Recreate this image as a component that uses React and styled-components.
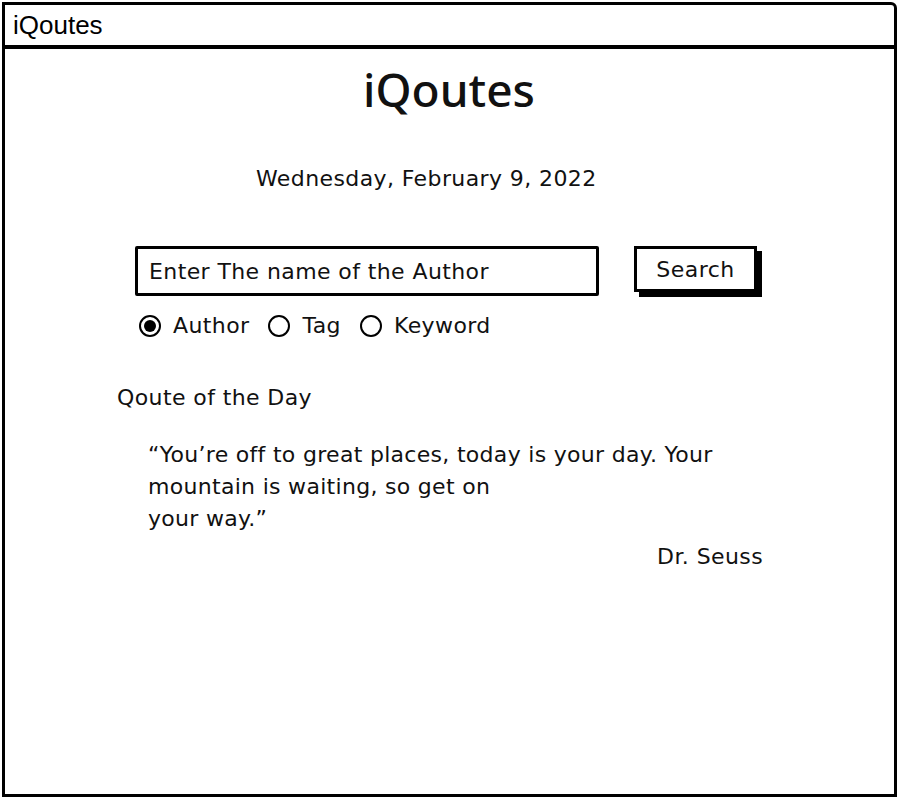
import React, { useState } from "react";
import styled, { createGlobalStyle } from "styled-components";

const GlobalStyle = createGlobalStyle`
  html, body {
    margin: 0;
    padding: 0;
    background: #fff;
  }
  body {
    font-family: "DejaVu Sans", "Noto Sans", sans-serif;
    letter-spacing: 0.4px;
    color: #111;
  }
`;

const Window = styled.div`
  box-sizing: border-box;
  margin: 2px 3px 3px 2px;
  height: 795px;
  border: 3px solid #000;
  border-top-right-radius: 6px;
  display: flex;
  flex-direction: column;
  background: #fff;
`;

const TitleBar = styled.div`
  height: 40px;
  border-bottom: 4px solid #000;
  display: flex;
  align-items: center;
  padding-left: 8px;
  font-family: "Liberation Sans", Arial, sans-serif;
  font-size: 26px;
  letter-spacing: 0;
  color: #000;
`;

const Content = styled.div`
  display: flex;
  flex-direction: column;
  padding: 0 131px 0 112px;
`;

const Heading = styled.h1`
  margin: 12px 0 0;
  text-align: center;
  font-family: "Noto Sans", sans-serif;
  font-size: 46px;
  line-height: 56px;
  font-weight: 500;
  letter-spacing: 0;
  padding-left: 18px;
`;

const DateLine = styled.div`
  margin-top: 47px;
  padding-left: 139px;
  font-size: 22px;
  line-height: 29px;
`;

const SearchRow = styled.div`
  margin-top: 53px;
  display: flex;
  align-items: flex-start;
  gap: 35px;
  padding-left: 18px;
`;

const SearchInput = styled.input`
  box-sizing: border-box;
  width: 464px;
  height: 50px;
  border: 3.5px solid #000;
  border-radius: 2px;
  padding: 0 11px;
  font-family: inherit;
  font-size: 22px;
  letter-spacing: 0.4px;
  color: #111;
  outline: none;
  &::placeholder {
    color: #111;
  }
`;

const SearchButton = styled.button`
  box-sizing: border-box;
  width: 123px;
  height: 46px;
  border: 3px solid #000;
  background: #fff;
  box-shadow: 5px 5px 0 #000;
  font-family: inherit;
  font-size: 22px;
  letter-spacing: 0.5px;
  color: #111;
  padding: 0;
  cursor: pointer;
`;

const RadioRow = styled.div`
  margin-top: 15px;
  display: flex;
  align-items: center;
  padding-left: 22px;
  gap: 19px;
`;

const RadioLabel = styled.label`
  display: flex;
  align-items: center;
  gap: 12px;
  font-size: 22px;
  line-height: 30px;
  cursor: pointer;
`;

const RadioDot = styled.span`
  box-sizing: border-box;
  width: 22px;
  height: 22px;
  border: 2px solid #000;
  border-radius: 50%;
  display: flex;
  align-items: center;
  justify-content: center;
  &::after {
    content: "";
    width: 12px;
    height: 12px;
    border-radius: 50%;
    background: #000;
    display: ${(p) => (p.$checked ? "block" : "none")};
  }
`;

const SectionTitle = styled.div`
  margin-top: 42px;
  font-size: 22px;
  line-height: 30px;
`;

const Quote = styled.blockquote`
  margin: 26px 0 0;
  padding-left: 31px;
  font-size: 22px;
  line-height: 32px;
  letter-spacing: 0.3px;
`;

const Author = styled.div`
  margin-top: 7px;
  text-align: right;
  font-size: 22px;
  line-height: 30px;
`;

const options = ["Author", "Tag", "Keyword"];

export default function App() {
  const [mode, setMode] = useState("Author");

  return (
    <>
      <GlobalStyle />
      <Window>
        <TitleBar>iQoutes</TitleBar>
        <Content>
          <Heading>iQoutes</Heading>
          <DateLine>Wednesday, February 9, 2022</DateLine>
          <SearchRow>
            <SearchInput placeholder="Enter The name of the Author" />
            <SearchButton>Search</SearchButton>
          </SearchRow>
          <RadioRow>
            {options.map((o) => (
              <RadioLabel key={o} onClick={() => setMode(o)}>
                <RadioDot $checked={mode === o} />
                {o}
              </RadioLabel>
            ))}
          </RadioRow>
          <SectionTitle>Qoute of the Day</SectionTitle>
          <Quote>
            “You’re off to great places, today is your day. Your
            <br />
            mountain is waiting, so get on
            <br />
            your way.”
          </Quote>
          <Author>Dr. Seuss</Author>
        </Content>
      </Window>
    </>
  );
}
